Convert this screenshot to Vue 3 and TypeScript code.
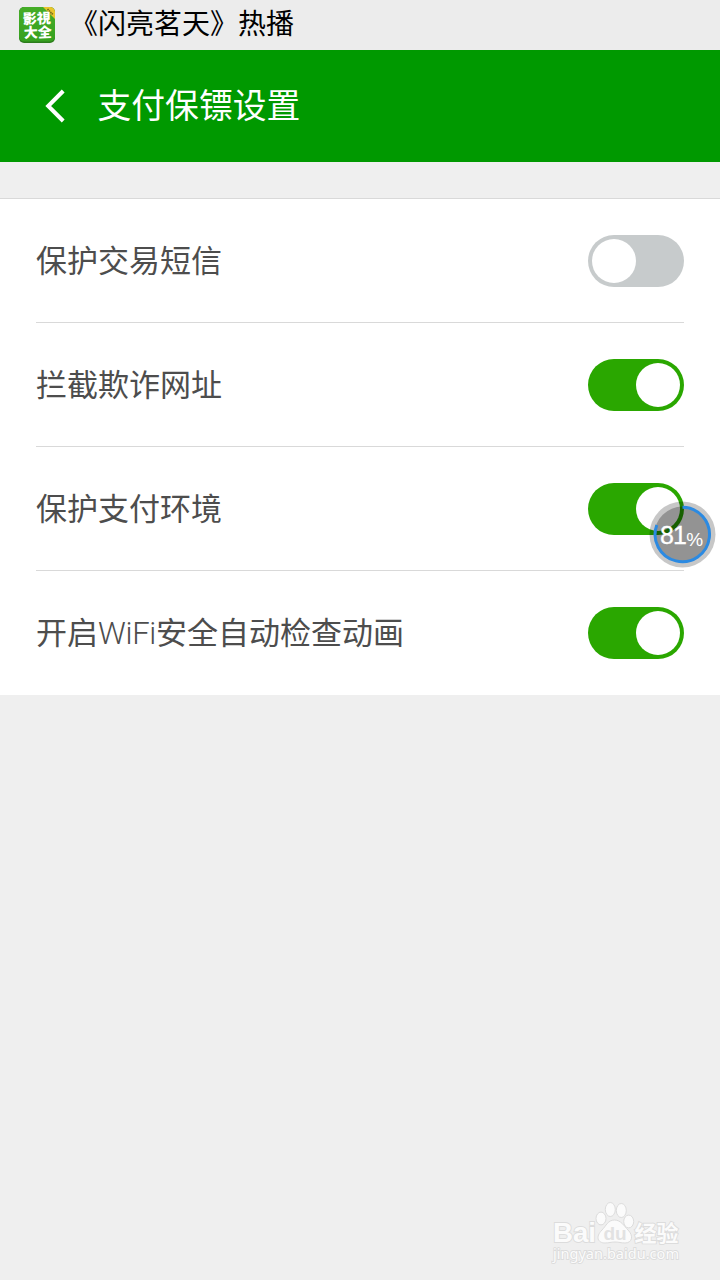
<script setup lang="ts">
import { ref } from 'vue'

interface Segment { text: string; latin?: boolean }
interface Setting { id: string; label: Segment[]; on: boolean }

const settings = ref<Setting[]>([
  { id: 'sms', label: [{ text: '保护交易短信' }], on: false },
  { id: 'url', label: [{ text: '拦截欺诈网址' }], on: true },
  { id: 'env', label: [{ text: '保护支付环境' }], on: true },
  { id: 'wifi', label: [{ text: '开启' }, { text: 'WiFi', latin: true }, { text: '安全自动检查动画' }], on: true },
])
</script>

<template>
  <main class="screen">
    <div class="status">
      <svg class="app-icon" viewBox="0 0 36 36">
        <defs>
          <linearGradient id="leaf" x1="0" y1="0" x2="0" y2="1">
            <stop offset="0" stop-color="#45ad27" />
            <stop offset="1" stop-color="#36a01f" />
          </linearGradient>
          <clipPath id="tile"><rect width="36" height="36" rx="5" /></clipPath>
        </defs>
        <g clip-path="url(#tile)">
          <rect width="36" height="36" fill="#2c7d1c" />
          <rect width="36" height="34.5" rx="5" fill="url(#leaf)" />
          <path d="M24 0H36V12Z" fill="#e9c52c" />
          <path d="M28.5 2.2 34 7.7" stroke="#6f6b1c" stroke-width="1.8" stroke-dasharray="1.4 .6" />
        </g>
        <g class="icon-text" transform="rotate(-2 18 18)">
          <text x="4" y="16.5">影視</text>
          <text x="4.5" y="30.5">大全</text>
        </g>
      </svg>
      <span class="ticker">《闪亮茗天》热播</span>
    </div>

    <header class="bar">
      <svg class="back" viewBox="0 0 20 34"><path d="M18.2 2 3.2 17 18.2 32" fill="none" stroke="#fff" stroke-width="4" /></svg>
      <h1>支付保镖设置</h1>
    </header>

    <section class="list">
      <div v-for="s in settings" :key="s.id" class="row">
        <span class="label"><span v-for="p in s.label" :key="p.text" :class="{ latin: p.latin }">{{ p.text }}</span></span>
        <button class="switch" :class="{ on: s.on }" role="switch" :aria-checked="s.on" @click="s.on = !s.on"><i /></button>
      </div>
    </section>

    <svg class="gauge" viewBox="0 0 68 68">
      <circle cx="33.5" cy="33.5" r="33" fill="#000" fill-opacity=".22" />
      <circle cx="33.5" cy="33.5" r="28" fill="#000" fill-opacity=".26" />
      <path d="M33.5 6.3A27.2 27.2 0 1 1 7.8 24" fill="none" stroke="#2b8ae2" stroke-width="3" />
      <text x="11" y="43" font-size="25" stroke="#fff" stroke-width=".3" letter-spacing="-1">81</text>
      <text x="37.3" y="44.5" font-size="19">%</text>
    </svg>

    <svg class="mark" viewBox="0 0 140 72">
      <g fill="#fbfbfb" stroke="#dcdcdc" stroke-width="1">
        <text class="brand" x="2" y="48" font-size="28" textLength="43" lengthAdjust="spacingAndGlyphs">Bai</text>
        <ellipse cx="50" cy="24.5" rx="5" ry="6.4" />
        <ellipse cx="59.3" cy="15.5" rx="5" ry="7" />
        <ellipse cx="70.3" cy="16.5" rx="5" ry="7" />
        <ellipse cx="77.7" cy="27.5" rx="5" ry="6.4" />
        <path d="M63.5 26C57 26 55 32 51 36 44 43 47 49 54 49 58 49 60 48 64 48 68 48 70 49 74 49 81 49 83 42 77 36 73 32 70 26 63.5 26Z" />
        <text class="brand du" x="52.5" y="45.5" font-size="19">du</text>
        <text class="cjk" x="83.5" y="46.5" font-size="22">经验</text>
        <text class="url" x="2" y="64.5" textLength="126" lengthAdjust="spacingAndGlyphs">jingyan.baidu.com</text>
      </g>
    </svg>
  </main>
</template>

<style>
body { background: #efefef; }
</style>

<style scoped>
.screen {
  position: relative;
  height: 1280px;
  overflow: hidden;
  background: #efefef;
  font-family: "Noto Sans CJK SC", sans-serif;
}
.status {
  display: flex;
  align-items: center;
  height: 50px;
  padding-left: 19px;
  background: #ececec;
}
.app-icon { width: 36px; height: 36px; }
.icon-text text { font: 900 14px "Noto Sans CJK SC", sans-serif; fill: #fff; }
.ticker { margin-left: 15px; font-size: 28px; line-height: 44px; height: 50px; color: #000; }
.bar {
  display: flex;
  align-items: center;
  height: 112px;
  box-sizing: border-box;
  padding-left: 45px;
  background: #009900;
}
.back { width: 20px; height: 34px; }
h1 { margin: 0 0 4px 32.5px; font-size: 33.8px; font-weight: 400; line-height: 48px; color: #fff; }
.list {
  margin-top: 36px;
  padding: 0 36px;
  border-top: 1px solid #d9d9d9;
  background: #fff;
}
.row {
  display: flex;
  align-items: center;
  justify-content: space-between;
  height: 124px;
  box-sizing: border-box;
  border-bottom: 1px solid #d9d9d9;
}
.row:last-child { border-bottom-color: transparent; }
.label { margin-bottom: 4px; font-size: 31px; line-height: 46px; color: #4d4d4d; white-space: nowrap; }
.latin { font-family: Roboto, sans-serif; font-weight: 300; line-height: 0; letter-spacing: -.3px; }
.switch {
  display: flex;
  width: 96px;
  height: 52px;
  padding: 4px;
  border: 0;
  border-radius: 26px;
  background: #c7cbcc;
}
.switch.on { justify-content: flex-end; background: #2aa700; }
.switch i { width: 44px; height: 44px; border-radius: 50%; background: #fff; }
.gauge { position: absolute; left: 649px; top: 501px; width: 68px; height: 68px; }
.gauge text { font-family: "Liberation Sans", sans-serif; fill: #fff; }
.mark { position: absolute; left: 551px; top: 1194px; width: 140px; height: 72px; }
.mark text { paint-order: stroke; stroke-width: 1.8px; }
.brand { font-family: "Liberation Sans", sans-serif; font-weight: 700; }
.mark .du { fill: #e2e2e2; stroke: none; }
.cjk { font-family: "Noto Sans CJK SC", sans-serif; font-weight: 700; }
.url { font: 15px "Noto Sans", sans-serif; }
</style>
